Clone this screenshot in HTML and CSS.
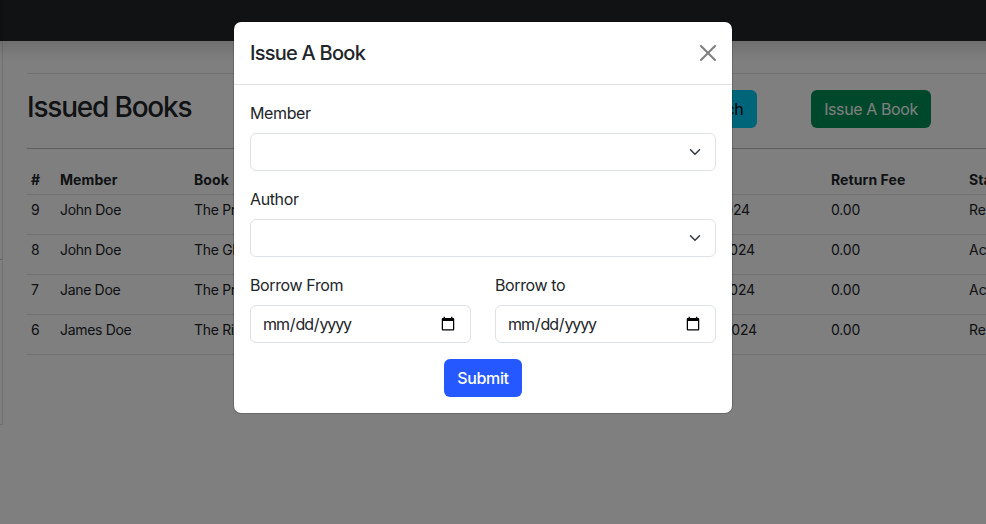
FILE: index.html
```html
<!DOCTYPE html>
<html lang="en">
<head>
<meta charset="utf-8">
<title>Issued Books</title>
<link rel="stylesheet" href="styles.css">
</head>
<body>
<header class="navbar"></header>
<div class="page">
  <aside class="sidebar"><div class="sidebar-rule"></div></aside>
  <main class="content">
    <div class="toolbar">
      <h2 class="title">Issued Books</h2>
      <button class="btn btn-info">Search</button>
      <button class="btn btn-success">Issue A Book</button>
    </div>
    <table class="table">
      <colgroup><col class="c-id"><col class="c-member"><col class="c-book"><col class="c-date"><col class="c-fee"><col class="c-status"></colgroup>
      <thead><tr><th>#</th><th>Member</th><th>Book</th><th></th><th>Return Fee</th><th>Status</th></tr></thead>
      <tbody>
        <tr><td>9</td><td>John Doe</td><td>The Pr</td><td class="date date-short">2024</td><td class="fee">0.00</td><td class="status">Returned</td></tr>
        <tr><td>8</td><td>John Doe</td><td>The Gl</td><td class="date">2024</td><td class="fee">0.00</td><td class="status">Active</td></tr>
        <tr><td>7</td><td>Jane Doe</td><td>The Pr</td><td class="date">2024</td><td class="fee">0.00</td><td class="status">Active</td></tr>
        <tr><td>6</td><td>James Doe</td><td>The Ri</td><td class="date date-long">2024</td><td class="fee">0.00</td><td class="status">Returned</td></tr>
      </tbody>
    </table>
  </main>
</div>
<div class="backdrop">
  <section class="modal" role="dialog" aria-labelledby="modal-title">
    <div class="modal-header">
      <h5 class="modal-title" id="modal-title">Issue A Book</h5>
      <svg class="close" viewBox="0 0 16 16" role="img" aria-label="Close"><path d="M.293.293a1 1 0 0 1 1.414 0L8 6.586 14.293.293a1 1 0 1 1 1.414 1.414L9.414 8l6.293 6.293a1 1 0 0 1-1.414 1.414L8 9.414l-6.293 6.293a1 1 0 0 1-1.414-1.414L6.586 8 .293 1.707a1 1 0 0 1 0-1.414z"/></svg>
    </div>
    <form class="modal-body">
      <div class="field">
        <label class="label">Member</label>
        <div class="control select"><svg class="caret" viewBox="0 0 16 16"><path d="m2 5 6 6 6-6"/></svg></div>
      </div>
      <div class="field">
        <label class="label">Author</label>
        <div class="control select"><svg class="caret" viewBox="0 0 16 16"><path d="m2 5 6 6 6-6"/></svg></div>
      </div>
      <div class="row">
        <div class="field">
          <label class="label" for="from">Borrow From</label>
          <input class="control date-input" type="date" id="from">
        </div>
        <div class="field">
          <label class="label" for="to">Borrow to</label>
          <input class="control date-input" type="date" id="to">
        </div>
      </div>
      <button class="btn btn-primary" type="button">Submit</button>
    </form>
  </section>
</div>
</body>
</html>
```
FILE: styles.css
```css
* { box-sizing: border-box; }
html, body { height: 100%; }
body {
  margin: 0;
  overflow: hidden;
  background: #fff;
  color: #212529;
  font: 400 16px/24px Inter, "Liberation Sans", sans-serif;
  letter-spacing: -0.38px;
}
.navbar {
  position: relative;
  height: 41px;
  margin: 0 -24px;
  border-left: 27px solid #1c2023;
  background: #212529;
  box-shadow: 0 8px 16px rgba(0, 0, 0, .15);
}
.page { display: flex; }
.sidebar { flex: none; width: 3px; height: 384px; border-right: 1px solid #dee2e6; border-bottom: 1px solid #dee2e6; }
.sidebar-rule { margin-top: 218px; height: 1px; background: #bbb; }
.content { flex: 1; min-width: 0; margin-left: 24px; padding-top: 32px; overflow: hidden; }
.toolbar {
  display: flex;
  align-items: flex-start;
  height: 76px;
  padding-top: 16px;
  border-top: 1px solid #dee2e6;
  border-bottom: 1px solid #bcbebf;
}
.title { flex: none; width: 650px; margin: 0; font-size: 28px; line-height: 34px; font-weight: 550; letter-spacing: -1.2px; }
.btn {
  flex: none;
  height: 38px;
  padding: 0;
  border: 1px solid transparent;
  border-radius: 6px;
  font: inherit;
  letter-spacing: inherit;
  white-space: nowrap;
}
.btn-info { width: 80px; padding-left: 2px; background: #00caf0; color: #000; }
.btn-success { width: 120px; margin-left: 54px; background: #009056; color: #fff; letter-spacing: -0.4px; }
.btn-primary { display: block; width: 78px; margin: 0 auto; background: #2559ff; color: #fff; font-weight: 450; }
.table { width: 1060px; margin-top: 16px; table-layout: fixed; border-collapse: collapse; font-size: 14px; line-height: 21px; letter-spacing: -0.32px; }
.c-id { width: 29px; }
.c-member { width: 134px; }
.c-book { width: 400px; }
.c-date { width: 237px; }
.c-fee { width: 138px; }
.table th, .table td { padding: 4px; text-align: left; vertical-align: top; border-bottom: 1px solid #dee2e6; }
.table th { height: 29px; font-weight: 700; letter-spacing: 0.08px; }
.table td { height: 40px; }
.table .fee, .table .date { letter-spacing: -0.15px; }
.table .status { letter-spacing: 0; }
.table .date { text-align: right; padding-right: 72px; }
.table .date-short { padding-right: 77px; }
.table .date-long { padding-right: 70px; }
.backdrop { position: absolute; inset: 0; background: rgba(0, 0, 0, .5); }
.modal {
  width: 500px;
  margin: 21px 0 0 233px;
  border: 1px solid rgba(0, 0, 0, .175);
  border-radius: 8px;
  background: #fff;
  background-clip: padding-box;
}
.modal-header {
  display: flex;
  align-items: center;
  justify-content: space-between;
  height: 63px;
  padding: 0 16px;
  border-bottom: 1px solid #dee2e6;
}
.modal-title { margin: 0; font-size: 20px; line-height: 30px; font-weight: 550; letter-spacing: -0.75px; }
.close { width: 16px; height: 16px; opacity: .5; }
.modal-body { padding: 16px; }
.field { margin-bottom: 16px; }
.label { display: block; margin-bottom: 8px; }
.control { width: 100%; height: 38px; border: 1px solid #dee2e6; border-radius: 6px; background: #fff; }
.select { display: flex; align-items: center; justify-content: flex-end; padding-right: 14px; }
.caret { width: 12px; height: 12px; fill: none; stroke: #343a40; stroke-width: 2; stroke-linecap: round; stroke-linejoin: round; }
.row { display: grid; grid-template-columns: 1fr 1fr; gap: 24px; }
.date-input { display: block; padding: 6px 12px 6px 11px; color: inherit; font: inherit; letter-spacing: -1.12px; }
```
